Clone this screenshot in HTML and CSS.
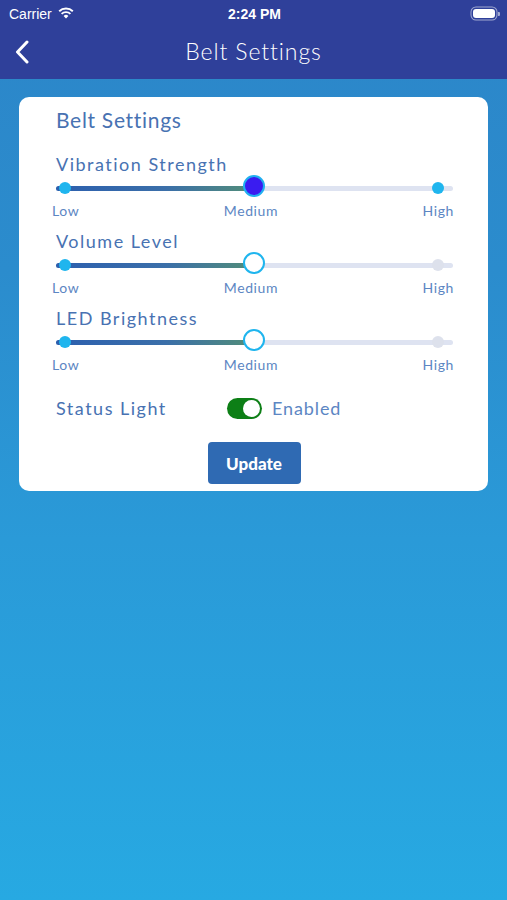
FILE: index.html
```html
<html>
<head>
<title>Belt Settings</title>
<link rel="stylesheet" href="styles.css">
</head>
<body>
<div class="top">
  <div class="status">
    <div class="carrier">Carrier
      <svg class="wifi" width="16" height="12" viewBox="0 0 16 12">
        <path d="M8 11.5 L5.6 8.9 A3.6 3.6 0 0 1 10.4 8.9 Z" fill="#fff"/>
        <path d="M3.6 6.9 A6.4 6.4 0 0 1 12.4 6.9" stroke="#fff" stroke-width="1.9" fill="none"/>
        <path d="M1.2 4.3 A9.8 9.8 0 0 1 14.8 4.3" stroke="#fff" stroke-width="1.9" fill="none"/>
      </svg>
    </div>
    <div class="time">2:24 PM</div>
    <div class="battery"><span class="cell"></span><span class="nub"></span></div>
  </div>
  <div class="navbar">
    <svg class="back" width="14" height="24" viewBox="0 0 14 24">
      <path d="M12 2 L2.5 12 L12 22" stroke="#fff" stroke-width="3" fill="none" stroke-linecap="round" stroke-linejoin="round"/>
    </svg>
    <div class="navtitle">Belt Settings</div>
  </div>
</div>

<div class="main">
  <div class="card">
    <div class="cardtitle">Belt Settings</div>

    <div class="setting">
      <div class="label">Vibration Strength</div>
      <div class="slider">
        <div class="track"><div class="fill"></div></div>
        <span class="dot low"></span>
        <span class="thumb solid"></span>
        <span class="dot high"></span>
      </div>
      <div class="ticks"><span>Low</span><span>Medium</span><span>High</span></div>
    </div>

    <div class="setting">
      <div class="label">Volume Level</div>
      <div class="slider">
        <div class="track"><div class="fill"></div></div>
        <span class="dot low"></span>
        <span class="thumb"></span>
        <span class="dot high off"></span>
      </div>
      <div class="ticks"><span>Low</span><span>Medium</span><span>High</span></div>
    </div>

    <div class="setting">
      <div class="label">LED Brightness</div>
      <div class="slider">
        <div class="track"><div class="fill"></div></div>
        <span class="dot low"></span>
        <span class="thumb"></span>
        <span class="dot high off"></span>
      </div>
      <div class="ticks"><span>Low</span><span>Medium</span><span>High</span></div>
    </div>

    <div class="statusrow">
      <div class="label">Status Light</div>
      <div class="toggle"><span class="knob"></span></div>
      <div class="enabled">Enabled</div>
    </div>

    <div class="actions"><button class="update">Update</button></div>
  </div>
</div>
</body>
</html>
```

FILE: styles.css
```css
html, body { margin:0; padding:0; }
body {
  width:507px; height:900px; overflow:hidden;
  font-family: Lato, "Open Sans", sans-serif;
  background: linear-gradient(#2C86C9 0%, #2B8CCD 30%, #2A9AD8 60%, #27A9E2 100%);
}
.top { background:#2F409A; height:79px; color:#fff; }
.status { height:27px; display:flex; align-items:center; justify-content:space-between; padding:0 7px 0 9px; font-family:"Liberation Sans", Arial, sans-serif; font-size:14px; }
.carrier { display:flex; align-items:center; gap:6px; width:90px; }
.wifi { margin-top:-2px; }
.time { font-weight:bold; }
.battery { width:90px; display:flex; justify-content:flex-end; align-items:center; }
.cell { width:22px; height:9px; background:#fff; border-radius:3px; box-shadow:0 0 0 1.5px #2F409A, 0 0 0 2.5px rgba(255,255,255,.55); }
.nub { width:2px; height:4px; background:rgba(255,255,255,.55); margin-left:3px; border-radius:0 1px 1px 0; }
.navbar { height:52px; position:relative; display:flex; align-items:center; justify-content:center; }
.back { position:absolute; left:15px; top:13px; }
.navtitle { font-size:23px; letter-spacing:.9px; margin-top:-4px; font-weight:300; }

.main { padding:18px 19px 0 19px; }
.card { background:#fff; border-radius:10px; padding:8px 36px 6px 37px; height:380px; color:#4872B2; }
.cardtitle { font-size:21px; letter-spacing:.7px; height:30px; line-height:30px; margin-bottom:19px; }
.label { font-size:18px; letter-spacing:1.5px; line-height:20px; }
.setting { height:77px; }
.slider { position:relative; height:12px; margin:8px -1px 0 0; }
.track { position:absolute; left:0; right:0; top:4px; height:5px; background:#DEE3F1; border-radius:3px; }
.fill { width:199px; height:100%; background:linear-gradient(90deg,#2C5FAE,#3B6FA9 55%,#528E78); border-radius:3px; }
.dot { position:absolute; top:0; width:12px; height:12px; border-radius:50%; background:#1FB5EE; }
.dot.low { left:3px; }
.dot.high { left:376px; }
.dot.off { background:#DDE1EC; }
.thumb { position:absolute; left:189px; top:-5px; width:18px; height:18px; border-radius:50%; background:#fff; border:2.5px solid #1FB5EE; box-sizing:content-box; margin:-2px; }
.thumb.solid { background:#3A1CF0; border-color:#21B0F0; }
.ticks { display:flex; justify-content:space-between; font-size:14px; color:#5C86C3; margin:9px -2px 0 -4px; line-height:16px; letter-spacing:.6px; }
.statusrow { display:flex; align-items:center; margin-top:7px; height:32px; }
.statusrow .label { width:171px; }
.toggle { width:35px; height:21px; border-radius:11px; background:#0D7F16; position:relative; margin-right:10px; }
.knob { position:absolute; right:2px; top:2px; width:17px; height:17px; border-radius:50%; background:#fff; }
.enabled { font-size:18px; letter-spacing:.9px; color:#5C86C3; }
.actions { display:flex; justify-content:center; margin-top:18px; }
.update { width:93px; height:42px; background:#2F6AB3; color:#fff; border:none; border-radius:4px; font-family:Lato, sans-serif; font-weight:900; font-size:17px; padding:0; }
```
